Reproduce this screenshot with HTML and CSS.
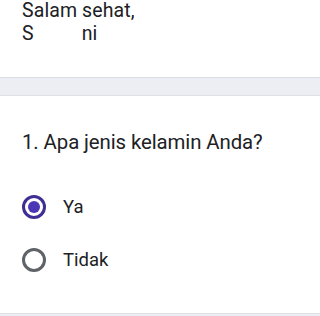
FILE: index.html
```html
<!DOCTYPE html>
<html>
<head>
<meta charset="utf-8">
<link rel="stylesheet" href="styles.css">
</head>
<body>
<div class="card top">
  <p class="line">Salam sehat,</p>
  <p class="line">S<span class="gap"></span>ni</p>
</div>
<div class="band"></div>
<div class="card question">
  <h2 class="qtitle">1. Apa jenis kelamin Anda?</h2>
  <div class="option">
    <span class="radio checked"><span class="dot"></span></span>
    <span class="label">Ya</span>
  </div>
  <div class="option">
    <span class="radio"></span>
    <span class="label">Tidak</span>
  </div>
</div>
<div class="band bottom"></div>
</body>
</html>
```
FILE: styles.css
```css
html, body {
  margin: 0;
  padding: 0;
  background: #ffffff;
  font-family: Roboto, "Liberation Sans", sans-serif;
  color: #202124;
  width: 320px;
  height: 316px;
  overflow: hidden;
}
.card {
  background: #fff;
  padding-left: 22px;
}
.top {
  height: 78px;
  box-sizing: border-box;
  border-bottom: 1px solid #dcdde0;
}
.line {
  margin: 0;
  font-size: 19.5px;
  line-height: 22px;
  letter-spacing: 0.1px;
}
.line + .line {
  margin-top: 1px;
}
.gap {
  display: inline-block;
  width: 48px;
}
.band {
  height: 17px;
  background: #eceef4;
  border-bottom: 1px solid #dfe1e4;
}
.question {
  height: 217px;
  box-sizing: border-box;
  padding-top: 34px;
}
.qtitle {
  margin: 0 0 40px 0;
  font-weight: 400;
  font-size: 20.4px;
  line-height: 24px;
  letter-spacing: -0.1px;
}
.option {
  display: flex;
  align-items: center;
  height: 26px;
  margin-bottom: 27px;
}
.radio {
  width: 24px;
  height: 24px;
  box-sizing: border-box;
  border: 3px solid #5f6368;
  border-radius: 50%;
  display: flex;
  align-items: center;
  justify-content: center;
  flex: none;
}
.radio.checked {
  border-color: #3f2f95;
}
.dot {
  width: 12px;
  height: 12px;
  border-radius: 50%;
  background: #4a37b5;
}
.label {
  margin-left: 17px;
  font-size: 18.5px;
}
.bottom {
  border-bottom: none;
  border-top: 1px solid #dfe1e4;
  height: 3px;
}
```
